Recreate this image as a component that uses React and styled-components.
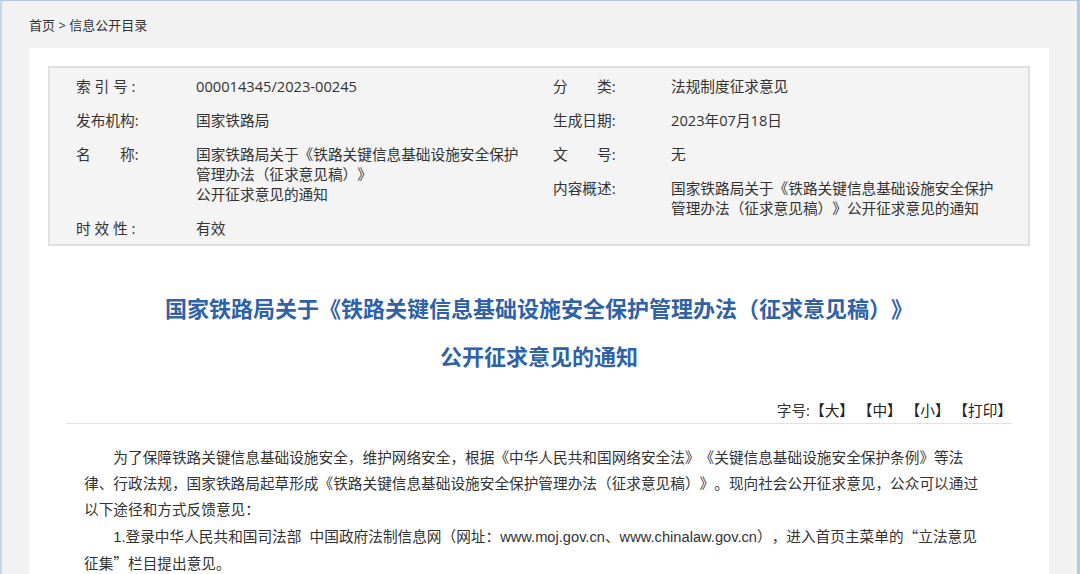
import React from "react";
import styled, { createGlobalStyle } from "styled-components";

const Global = createGlobalStyle`
  html, body { margin: 0; padding: 0; }
  body {
    background: #f2f2f2;
    font-family: "Open Sans", "Noto Sans CJK SC", sans-serif;
    color: #333;
    text-spacing-trim: space-all;
  }
`;

const Frame = styled.div`
  min-height: 574px;
  box-sizing: border-box;
  background: #f2f2f2;
  border-top: 1px solid #b4c6dd;
  border-left: 2px solid #c6d6ea;
  border-right: 3px solid #b3c9e6;
  overflow: hidden;
`;

const Crumb = styled.div`
  height: 47px;
  box-sizing: border-box;
  padding: 15px 0 0 27px;
  font-size: 13px;
  line-height: 18px;
  color: #333;
  white-space: pre;
`;

const Panel = styled.div`
  margin-left: 27px;
  width: 1020px;
  background: #fff;
  padding: 18px 19px 40px;
  box-sizing: border-box;
  min-height: 600px;
`;

const InfoBox = styled.div`
  border: 2px solid #e0e0e0;
  background: #f4f4f4;
  padding: 8px 0 6px 26px;
  display: grid;
  grid-template-columns: 477px 1fr;
  font-size: 14.67px;
  line-height: 20px;
  color: #333;
`;

const InfoList = styled.div`
  display: flex;
  flex-direction: column;
  gap: 14px;
`;

const InfoRow = styled.div`
  display: grid;
  grid-template-columns: ${(p) => p.$label}px 330px;
`;

const Label = styled.span`
  white-space: pre;
`;

const Value = styled.div``;

const Article = styled.div`
  margin: 0 18px;
`;

const Title = styled.h1`
  margin: 37px 0 0;
  text-align: center;
  font-family: "Noto Sans CJK SC", sans-serif;
  font-weight: 700;
  font-size: 22px;
  line-height: 48px;
  color: #2f62a6;
`;

const Tools = styled.div`
  margin-top: 21px;
  padding: 0 0 3px 0;
  text-align: right;
  font-size: 14.67px;
  line-height: 20px;
  color: #333;
  border-bottom: 1px solid #e2e2e2;
  white-space: pre;
`;

const ToolLink = styled.span`
  color: #222;
  cursor: pointer;
`;

const Body = styled.div`
  padding: 21px 0 0 18px;
  width: 903px;
  font-family: "Liberation Sans", "Noto Sans CJK SC", sans-serif;
  font-size: 14.67px;
  line-height: 26px;
  color: #333;
`;

const Para = styled.p`
  margin: 0;
  text-indent: 2em;
`;

const Q = styled.span`
  font-family: "Noto Sans CJK SC", sans-serif;
`;

const left = [
  ["索 引 号 :", "000014345/2023-00245"],
  ["发布机构:", "国家铁路局"],
  [
    "名\u3000\u3000称:",
    <>
      国家铁路局关于《铁路关键信息基础设施安全保护管理办法（征求意见稿）》
      <br />
      公开征求意见的通知
    </>,
  ],
  ["时 效 性 :", "有效"],
];

const right = [
  ["分\u3000\u3000类:", "法规制度征求意见"],
  ["生成日期:", "2023年07月18日"],
  ["文\u3000\u3000号:", "无"],
  ["内容概述:", "国家铁路局关于《铁路关键信息基础设施安全保护管理办法（征求意见稿）》公开征求意见的通知"],
];

export default function App() {
  return (
    <>
      <Global />
      <Frame>
        <Crumb>{"首页 > 信息公开目录"}</Crumb>
        <Panel>
          <InfoBox>
            <InfoList>
              {left.map(([l, v]) => (
                <InfoRow key={l} $label={120}>
                  <Label>{l}</Label>
                  <Value>{v}</Value>
                </InfoRow>
              ))}
            </InfoList>
            <InfoList>
              {right.map(([l, v]) => (
                <InfoRow key={l} $label={118}>
                  <Label>{l}</Label>
                  <Value>{v}</Value>
                </InfoRow>
              ))}
            </InfoList>
          </InfoBox>
          <Article>
            <Title>
              国家铁路局关于《铁路关键信息基础设施安全保护管理办法（征求意见稿）》
              <br />
              公开征求意见的通知
            </Title>
            <Tools>
              字号:<ToolLink>【大】</ToolLink> <ToolLink>【中】</ToolLink>{" "}
              <ToolLink>【小】</ToolLink> <ToolLink>【打印】</ToolLink>
            </Tools>
            <Body>
              <Para>
                为了保障铁路关键信息基础设施安全，维护网络安全，根据《中华人民共和国网络安全法》《关键信息基础设施安全保护条例》等法律、行政法规，国家铁路局起草形成《铁路关键信息基础设施安全保护管理办法（征求意见稿）》。现向社会公开征求意见，公众可以通过以下途径和方式反馈意见：
              </Para>
              <Para>
                1.登录中华人民共和国司法部{"\u00a0 "}中国政府法制信息网（网址：www.moj.gov.cn、www.chinalaw.gov.cn），进入首页主菜单的<Q>“</Q>立法意见征集<Q>”</Q>栏目提出意见。
              </Para>
            </Body>
          </Article>
        </Panel>
      </Frame>
    </>
  );
}
